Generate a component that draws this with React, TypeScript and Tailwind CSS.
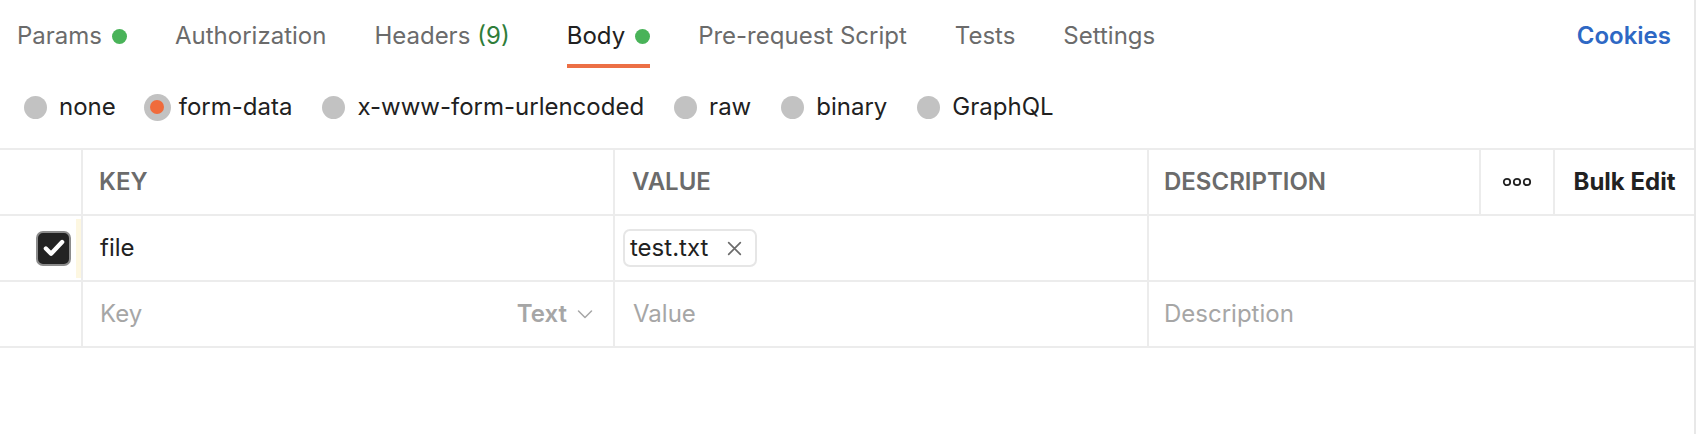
import React from 'react';

const tabs = [
  { label: 'Params', dot: true },
  { label: 'Authorization' },
  { label: 'Headers', count: '(9)' },
  { label: 'Body', dot: true, active: true },
  { label: 'Pre-request Script' },
  { label: 'Tests' },
  { label: 'Settings' },
];

const bodyTypes = ['none', 'form-data', 'x-www-form-urlencoded', 'raw', 'binary', 'GraphQL'];

const GreenDot = () => <span className="ml-[10px] inline-block h-[15px] w-[15px] rounded-full bg-[#49b359]" />;

const App: React.FC = () => {
  return (
    <div className="h-[434px] w-[1708px] bg-white text-[24px] text-[#212121]" style={{ fontFamily: 'Inter, "Noto Sans", sans-serif' }}>
      <div className="h-full w-[1696px] border-r-2 border-[#e8e8e8]">
        {/* tab bar */}
        <div className="flex h-[68px] items-stretch pl-[17px] pr-[23px]">
          <div className="flex gap-[48px]">
            {tabs.map((tab) => (
              <div
                key={tab.label}
                className={
                  'flex items-center border-b-[4px] pt-[8px] ' +
                  (tab.active ? 'border-[#ec6f45] text-[#212121]' : 'border-transparent text-[#6b6b6b]') +
                  (tab.count ? ' mr-[9px]' : '')
                }
              >
                <span>{tab.label}</span>
                {tab.count && <span className="ml-[7px] text-[#2f7d3a]">{tab.count}</span>}
                {tab.dot && <GreenDot />}
              </div>
            ))}
          </div>
          <div className="ml-auto flex items-center pt-[4px] font-semibold text-[#2e68c4]">Cookies</div>
        </div>

        {/* body type radios */}
        <div className="flex h-[80px] items-center gap-[30px] pb-[2px] pl-[24px]">
          {bodyTypes.map((t) => (
            <div key={t} className={'flex items-center ' + (t === 'form-data' ? 'gap-[10px]' : 'gap-[12px]')}>
              {t === 'form-data' ? (
                <span className="flex h-[23px] w-[23px] items-center justify-center rounded-full bg-[#c2c2c2] shadow-[0_0_0_2px_#c2c2c2]">
                  <span className="h-[14px] w-[14px] rounded-full bg-[#f06b3c]" />
                </span>
              ) : (
                <span className="h-[23px] w-[23px] rounded-full bg-[#c2c2c2]" />
              )}
              <span>{t}</span>
            </div>
          ))}
        </div>

        {/* table */}
        <div className="border-t-2 border-[#ececec]">
          <div className="flex h-[66px] border-b-2 border-[#ececec] font-semibold text-[#6b6b6b]">
            <div className="w-[83px] border-r-2 border-[#ececec]" />
            <div className="flex w-[532px] items-center border-r-2 border-[#ececec] pl-[16px]">KEY</div>
            <div className="flex w-[534px] items-center border-r-2 border-[#ececec] pl-[17px]">VALUE</div>
            <div className="flex w-[332px] items-center border-r-2 border-[#ececec] pl-[15px]">DESCRIPTION</div>
            <div className="flex w-[74px] items-center justify-center border-r-2 border-[#ececec]">
              <svg width="30" height="10" viewBox="0 0 30 10" fill="none" stroke="#212121" strokeWidth="1.8">
                <circle cx="5" cy="5" r="3.2" />
                <circle cx="15" cy="5" r="3.2" />
                <circle cx="25" cy="5" r="3.2" />
              </svg>
            </div>
            <div className="flex flex-1 items-center justify-center font-bold text-[#212121]">Bulk Edit</div>
          </div>

          <div className="flex h-[66px] border-b-2 border-[#ececec]">
            <div className="flex w-[83px] items-center border-r-2 border-[#ececec]">
              <div className="ml-[36px] flex h-[35px] w-[35px] items-center justify-center rounded-[7px] border-2 border-[#8c8c8c] bg-[#232323]">
                <svg width="26" height="26" viewBox="0 0 24 24" fill="none" stroke="white" strokeWidth="4" strokeLinecap="round" strokeLinejoin="round">
                  <path d="M4.5 12.5l4.8 4.8L19.5 6.5" />
                </svg>
              </div>
              <div className="ml-auto h-[59px] w-[5px] bg-[#fdf7e1]" />
            </div>
            <div className="flex w-[532px] items-center border-r-2 border-[#ececec] pl-[17px]">file</div>
            <div className="flex w-[534px] items-center border-r-2 border-[#ececec] pl-[8px]">
              <div className="flex h-[38px] items-center rounded-[7px] border-2 border-[#e6e6e6] pl-[5px] pr-[12px]">
                <span>test.txt</span>
                <svg className="ml-[18px]" width="17" height="17" viewBox="0 0 16 16" fill="none" stroke="#6b6b6b" strokeWidth="1.6" strokeLinecap="round">
                  <path d="M2.5 2.5l11 11M13.5 2.5l-11 11" />
                </svg>
              </div>
            </div>
            <div className="flex-1" />
          </div>

          <div className="flex h-[66px] border-b-2 border-[#ececec] text-[#a6a6a6]">
            <div className="w-[83px] border-r-2 border-[#ececec]" />
            <div className="flex w-[532px] items-center border-r-2 border-[#ececec] pl-[17px] pr-[20px]">
              <span>Key</span>
              <span className="ml-auto flex items-center gap-[10px] font-semibold">
                Text
                <svg width="16" height="10" viewBox="0 0 16 10" fill="none" stroke="#a6a6a6" strokeWidth="1.5" strokeLinecap="round" strokeLinejoin="round">
                  <path d="M1.5 2l6.5 6.5L14.5 2" />
                </svg>
              </span>
            </div>
            <div className="flex w-[534px] items-center border-r-2 border-[#ececec] pl-[18px]">Value</div>
            <div className="flex flex-1 items-center pl-[15px]">Description</div>
          </div>
        </div>
      </div>
    </div>
  );
};

export default App;
